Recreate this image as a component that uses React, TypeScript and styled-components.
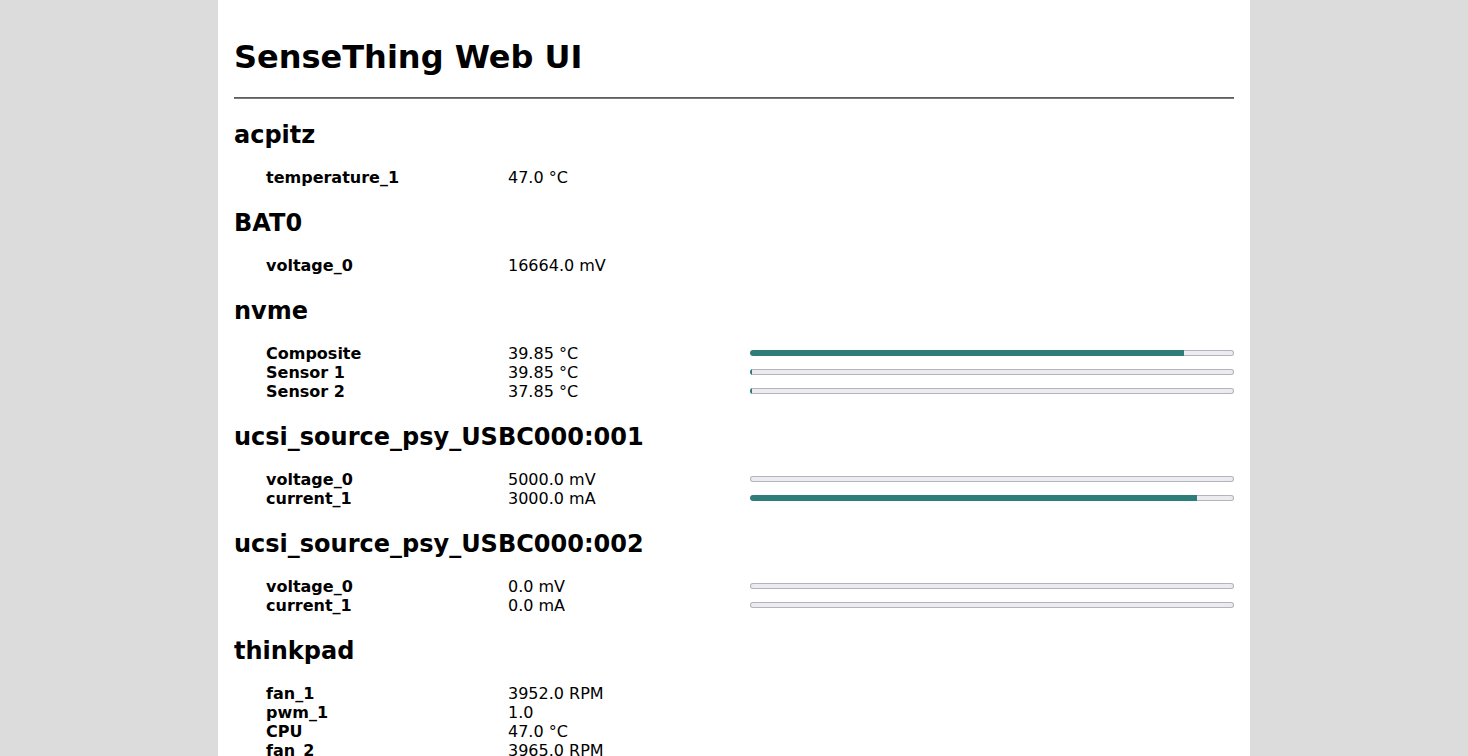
import React from "react";
import styled, { createGlobalStyle } from "styled-components";

const GlobalStyle = createGlobalStyle`
  html, body {
    margin: 0;
    padding: 0;
    background: #dcdcdc;
    font-family: "DejaVu Sans", sans-serif;
    color: #000;
  }
`;

const Page = styled.main`
  max-width: 1000px;
  min-height: 100vh;
  margin: 0 auto;
  padding: 17px 16px 0;
  background: #ffffff;
  display: flow-root;
`;

const Title = styled.h1`
  font-size: 32px;
  font-weight: bold;
  margin: 21.44px 0 20.44px;
`;

const Rule = styled.hr`
  height: 0;
  margin: 8px 0;
  border: none;
  border-top: 1px solid #5e5e5e;
  border-bottom: 1px solid #7a7a7a;
`;

const DeviceName = styled.h2`
  font-size: 24px;
  font-weight: bold;
  margin: 22px 0 19px;
`;

const SensorGrid = styled.div`
  display: grid;
  grid-template-columns: 1fr 1fr 2fr;
  margin-left: 32px;
  font-size: 16px;
  line-height: 19px;
`;

const Label = styled.span`
  font-weight: bold;
`;

const Value = styled.span`
  font-weight: normal;
`;

const Track = styled.div`
  align-self: center;
  height: 6px;
  border-radius: 3px;
  background: #ebebf0;
  box-shadow: inset 0 0 0 1px #b4b4bd;
  overflow: hidden;
  display: flex;
`;

const Fill = styled.div`
  height: 100%;
  background: #2e7d79;
  border-radius: 3px 0 0 3px;
`;

type Sensor = { name: string; value: string; bar?: number };
type Device = { name: string; sensors: Sensor[] };

const devices: Device[] = [
  { name: "acpitz", sensors: [{ name: "temperature_1", value: "47.0 °C" }] },
  { name: "BAT0", sensors: [{ name: "voltage_0", value: "16664.0 mV" }] },
  {
    name: "nvme",
    sensors: [
      { name: "Composite", value: "39.85 °C", bar: 0.897 },
      { name: "Sensor 1", value: "39.85 °C", bar: 0.004 },
      { name: "Sensor 2", value: "37.85 °C", bar: 0.004 },
    ],
  },
  {
    name: "ucsi_source_psy_USBC000:001",
    sensors: [
      { name: "voltage_0", value: "5000.0 mV", bar: 0 },
      { name: "current_1", value: "3000.0 mA", bar: 0.923 },
    ],
  },
  {
    name: "ucsi_source_psy_USBC000:002",
    sensors: [
      { name: "voltage_0", value: "0.0 mV", bar: 0 },
      { name: "current_1", value: "0.0 mA", bar: 0 },
    ],
  },
  {
    name: "thinkpad",
    sensors: [
      { name: "fan_1", value: "3952.0 RPM" },
      { name: "pwm_1", value: "1.0" },
      { name: "CPU", value: "47.0 °C" },
      { name: "fan_2", value: "3965.0 RPM" },
      { name: "pwm_2", value: "1.0" },
      { name: "GPU", value: "45.0 °C" },
    ],
  },
];

export default function App() {
  return (
    <>
      <GlobalStyle />
      <Page>
        <Title>SenseThing Web UI</Title>
        <Rule />
        {devices.map((d) => (
          <section key={d.name}>
            <DeviceName>{d.name}</DeviceName>
            <SensorGrid>
              {d.sensors.map((s) => (
                <React.Fragment key={s.name}>
                  <Label>{s.name}</Label>
                  <Value>{s.value}</Value>
                  {s.bar !== undefined ? (
                    <Track>
                      <Fill style={{ width: `${s.bar * 100}%` }} />
                    </Track>
                  ) : (
                    <span />
                  )}
                </React.Fragment>
              ))}
            </SensorGrid>
          </section>
        ))}
      </Page>
    </>
  );
}
